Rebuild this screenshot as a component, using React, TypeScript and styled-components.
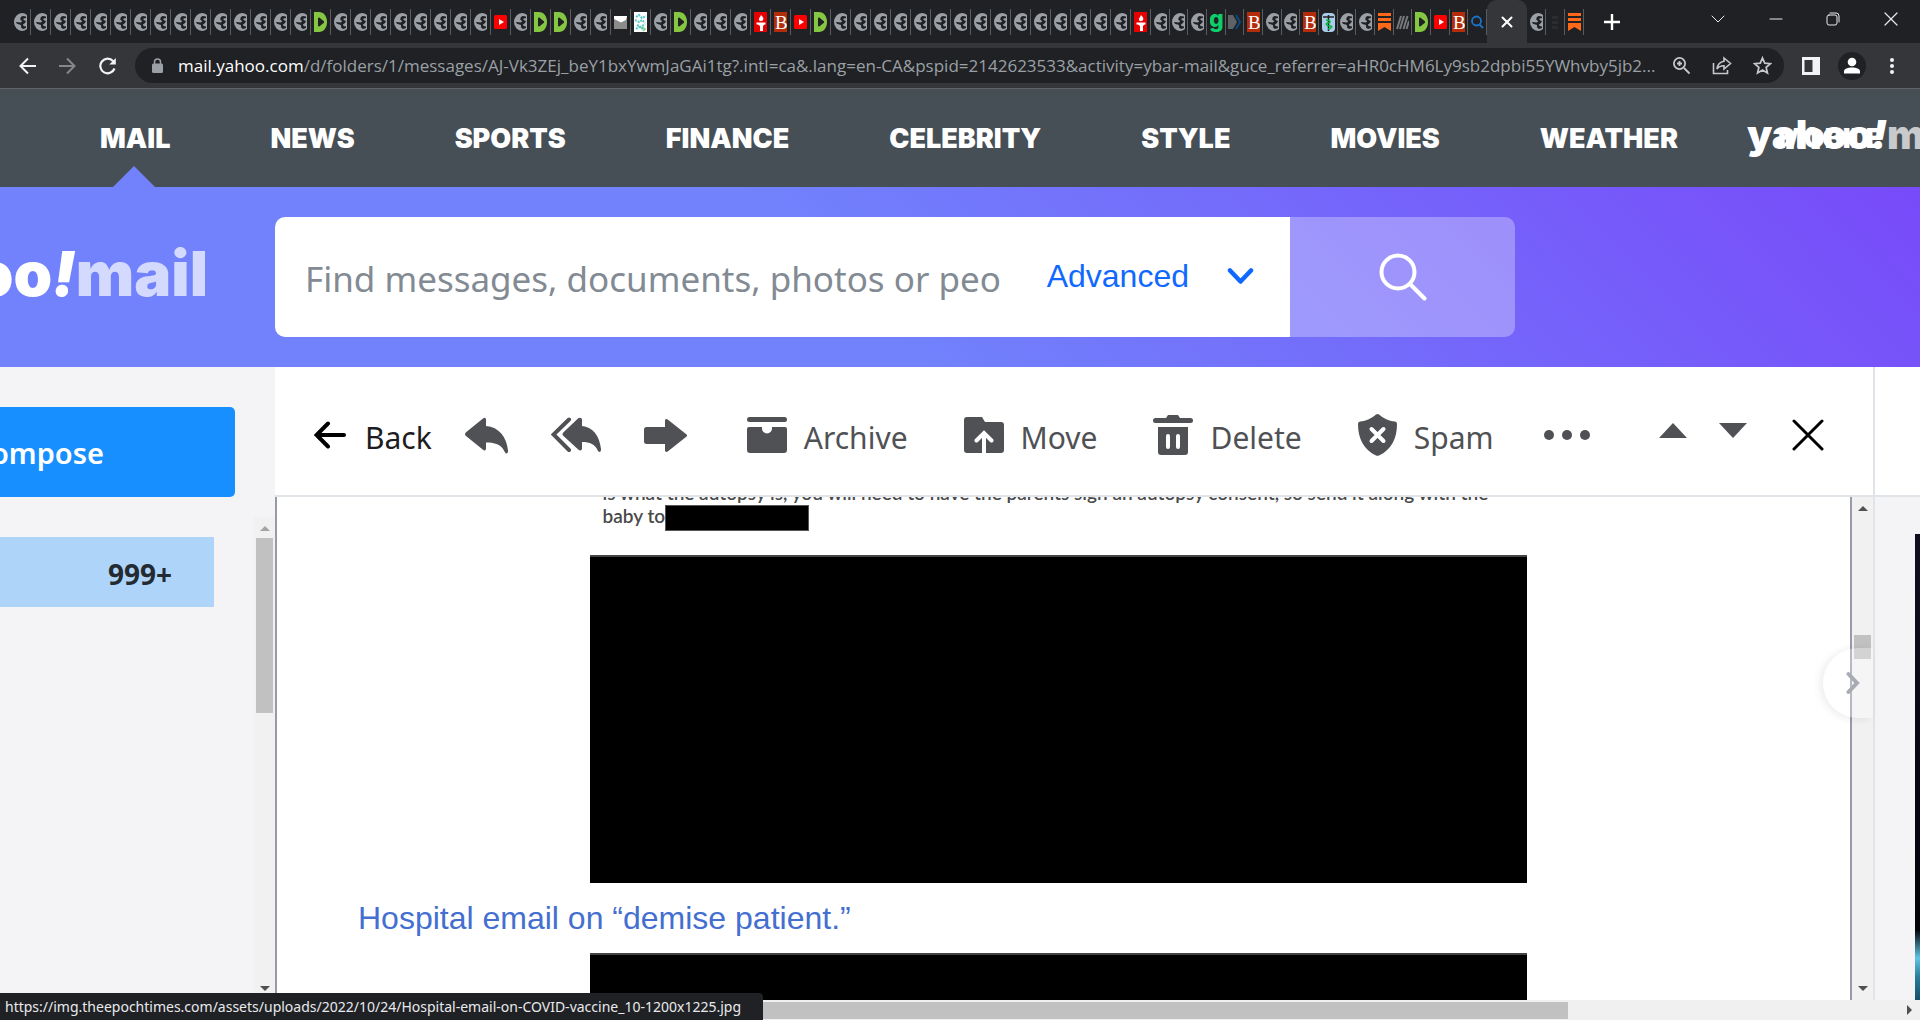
import React from "react";
import styled, { createGlobalStyle } from "styled-components";

const UI = `"Noto Sans", "Open Sans", sans-serif`;
const CHROME = `"Open Sans", "Noto Sans", sans-serif`;
const ARIAL = `"Liberation Sans", Arial, sans-serif`;

const Global = createGlobalStyle`
  *, *::before, *::after { box-sizing: border-box; }
  html, body { margin: 0; padding: 0; overflow: hidden; }
  button { border: 0; padding: 0; margin: 0; background: none; font: inherit; color: inherit; cursor: pointer; }
  a { color: inherit; text-decoration: none; }
  svg { display: block; flex: none; }
`;

const Page = styled.div`
  display: flex;
  flex-direction: column;
  height: 100vh;
  overflow: hidden;
  background: #fff;
  font-family: ${UI};
  position: relative;
`;

/* ---------- browser chrome ---------- */

const TabStrip = styled.div`
  display: flex;
  align-items: center;
  height: 43px;
  flex: none;
  padding-left: 11px;
  background: #202124;
`;

const Tab = styled.button<{ $w: number }>`
  flex: none;
  display: flex;
  align-items: center;
  justify-content: center;
  width: ${(p) => p.$w}px;
  height: 26px;
  border-right: 1px solid #5a5c60;
`;

const ActiveTab = styled.div`
  flex: none;
  align-self: flex-end;
  display: flex;
  align-items: center;
  justify-content: center;
  width: 40px;
  height: 43px;
  border-radius: 9px 9px 0 0;
  background: #35363a;
  color: #fff;
`;

const NewTab = styled.button`
  margin-left: 20px;
  color: #fff;
`;

const WindowButtons = styled.div`
  display: flex;
  align-items: center;
  justify-content: space-between;
  width: 187px;
  margin: 0 22px 6px auto;
  color: #e8eaed;
`;

const Toolbar = styled.div`
  display: flex;
  align-items: center;
  height: 46px;
  flex: none;
  padding: 0 20px 0 18px;
  border-bottom: 1px solid #5f6368;
  background: #35363a;
  color: #f1f3f4;
`;

const NavButtons = styled.div`
  display: flex;
  align-items: center;
  gap: 21px;
  width: 117px;
`;

const AddressBar = styled.div`
  display: flex;
  align-items: center;
  flex: 1;
  min-width: 0;
  height: 35px;
  padding: 0 12px 0 15px;
  border-radius: 18px;
  background: #202124;
  color: #c4c7cb;
`;

const Url = styled.div`
  flex: 1;
  min-width: 0;
  margin-left: 14px;
  overflow: hidden;
  white-space: nowrap;
  font: 17px/24px ${CHROME};
  color: #9aa0a6;
`;

const Host = styled.span`
  color: #fff;
`;

const AddressActions = styled.div`
  display: flex;
  gap: 21px;
  margin-left: 14px;
`;

const ChromeActions = styled.div`
  display: flex;
  align-items: center;
  gap: 18px;
  margin-left: 18px;
`;

const Avatar = styled.button`
  display: flex;
  align-items: center;
  justify-content: center;
  width: 28px;
  height: 28px;
  border-radius: 50%;
  background: #202124;
`;

/* ---------- yahoo header ---------- */

const SiteNav = styled.nav`
  position: relative;
  display: flex;
  flex: none;
  gap: 100px;
  height: 98px;
  padding: 0 0 0 100px;
  overflow: hidden;
  background: #464e56;
`;

const SiteLink = styled.a<{ $current?: boolean }>`
  position: relative;
  flex: none;
  padding-top: 35px;
  font: 900 27px/30px Inter, ${ARIAL};
  color: #fff;
  &::after {
    content: "";
    display: ${(p) => (p.$current ? "block" : "none")};
    position: absolute;
    left: 50%;
    bottom: 0;
    margin-left: -22px;
    border: 21px solid transparent;
    border-top: 0;
    border-bottom-color: #7182fc;
  }
`;

const Logo = styled.a<{ $size: number }>`
  display: flex;
  font: 900 ${(p) => p.$size}px/1 Inter, sans-serif;
  color: #fff;
`;

const FloatingLogo = styled(Logo)`
  position: absolute;
  top: 26px;
  left: calc(100% - 173px);
`;

const Bang = styled.span`
  font-style: italic;
`;

const Faded = styled.span`
  opacity: 0.7;
`;

const SearchHeader = styled.header`
  display: flex;
  flex: none;
  align-items: center;
  height: 180px;
  background: linear-gradient(45deg, #7182fc 44%, #784af9 100%);
`;

const LogoSlot = styled.div`
  display: flex;
  justify-content: flex-end;
  flex: none;
  width: 275px;
  padding: 0 67px 6px 0;
`;

const SearchForm = styled.form`
  display: flex;
  width: 1240px;
  height: 120px;
  overflow: hidden;
  border-radius: 10px;
`;

const SearchField = styled.div`
  display: flex;
  flex: 1;
  min-width: 0;
  align-items: center;
  padding: 0 36px 0 30px;
  background: #fff;
`;

const SearchInput = styled.input`
  flex: 1;
  min-width: 0;
  height: 60px;
  padding: 2px 0 0;
  border: 0;
  outline: 0;
  font: 35px/56px ${UI};
  &::placeholder {
    color: #828a93;
    opacity: 1;
  }
`;

const Advanced = styled.button`
  display: flex;
  align-items: center;
  gap: 38px;
  margin-left: 32px;
  padding-bottom: 2px;
  font: 32px/36px ${ARIAL};
  color: #0f69ff;
`;

const SearchButton = styled.button`
  display: flex;
  align-items: center;
  justify-content: center;
  width: 225px;
  background: rgba(255, 255, 255, 0.3);
`;

/* ---------- mail body ---------- */

const Workspace = styled.div`
  display: flex;
  flex: 1;
  min-height: 0;
`;

const Sidebar = styled.aside`
  display: flex;
  flex-direction: column;
  flex: none;
  width: 275px;
  background: #f4f4f6;
`;

const Compose = styled.button`
  display: flex;
  align-items: center;
  justify-content: flex-end;
  flex: none;
  width: 235px;
  height: 90px;
  margin: 40px 0 20px;
  padding: 2px 131px 0 0;
  border-radius: 0 5px 5px 0;
  background: #188fff;
  font: 600 29px/40px ${UI};
  color: #fff;
`;

const FolderPane = styled.div`
  display: flex;
  flex: 1;
  min-height: 0;
  justify-content: space-between;
`;

const FolderRow = styled.a`
  display: flex;
  align-items: center;
  justify-content: flex-end;
  width: 214px;
  height: 70px;
  margin-top: 20px;
  padding: 3px 42px 0 0;
  background: #aed4fa;
  font: 700 28px/36px ${UI};
  color: #232a31;
`;

const ScrollTrack = styled.div<{ $w: number }>`
  display: flex;
  flex-direction: column;
  align-items: center;
  flex: none;
  width: ${(p) => p.$w}px;
  background: #f1f1f1;
`;

const ScrollThumb = styled.div<{ $top: number; $h: number }>`
  width: 17px;
  height: ${(p) => p.$h}px;
  margin: ${(p) => p.$top}px 0 auto;
  background: #c1c1c1;
`;

const Arrow = styled.span<{ $dir: "up" | "down"; $dim?: boolean }>`
  flex: none;
  border: 5px solid transparent;
  ${(p) =>
    p.$dir === "up"
      ? `border-top: 0; border-bottom-color: ${p.$dim ? "#a3a3a3" : "#505050"}; margin-top: 9px;`
      : `border-bottom: 0; border-top-color: #505050; margin-bottom: 9px;`}
`;

const Reader = styled.main`
  position: relative;
  display: flex;
  flex-direction: column;
  flex: 1;
  min-width: 0;
`;

const Actions = styled.div`
  display: flex;
  align-items: center;
  flex: none;
  height: 130px;
  padding: 13px 49px 0 39px;
  border-bottom: 2px solid #e0e4e9;
  color: #4f5154;
`;

const ActionGroup = styled.div<{ $gap: number; $before?: number }>`
  display: flex;
  align-items: center;
  gap: ${(p) => p.$gap}px;
  margin-left: ${(p) => p.$before ?? 0}px;
`;

const Action = styled.button<{ $strong?: boolean }>`
  display: flex;
  align-items: center;
  gap: ${(p) => (p.$strong ? 19 : 17)}px;
  font: 30px/40px ${UI};
  color: ${(p) => (p.$strong ? "#1d1d1f" : "#4f5154")};
  & > svg {
    margin-top: -5px;
  }
`;

const MessageRow = styled.div`
  display: flex;
  flex: 1;
  min-height: 0;
`;

const Message = styled.article`
  flex: 1;
  min-width: 0;
  overflow: hidden;
  padding: 0 92px 0 81px;
  border: solid #979ba7;
  border-width: 0 2px;
`;

const Scan = styled.div`
  width: 937px;
  max-width: 100%;
  margin: 0 auto;
`;

const ScanText = styled.p`
  margin: -16px 0 28px 13px;
  height: 46px;
  font: 600 19px/23px Lato, sans-serif;
  color: #4a4a4a;
  white-space: nowrap;
`;

const InlineRedaction = styled.span`
  display: inline-block;
  width: 144px;
  height: 26px;
  margin: -2px 0;
  vertical-align: middle;
  background: #000;
  border: 1px solid #555;
`;

const Redaction = styled.div`
  height: 328px;
  background: #000;
  border-top: 2px solid #444;
`;

const Caption = styled.a`
  display: block;
  margin: 17px 0;
  font: 32px/36px ${ARIAL};
  color: #446fd0;
`;

const Collapse = styled.button`
  position: absolute;
  right: 0;
  top: 281px;
  display: flex;
  align-items: center;
  justify-content: center;
  width: 50px;
  height: 70px;
  padding-left: 10px;
  border-radius: 35px 0 0 35px;
  background: rgba(255, 255, 255, 0.3);
  box-shadow: -3px 1px 8px rgba(0, 0, 0, 0.08);
  color: #a9abb3;
`;

const SidePane = styled.aside`
  display: flex;
  flex-direction: column;
  flex: none;
  width: 47px;
  border-left: 2px solid #e0e4e9;
`;

const SidePaneTop = styled.div`
  height: 130px;
  flex: none;
  border-bottom: 2px solid #e0e4e9;
`;

const SidePaneBody = styled.div`
  display: flex;
  flex: 1;
  justify-content: flex-end;
  padding-top: 37px;
  background: #f4f4f7;
`;

const Advert = styled.div`
  width: 5px;
  background: linear-gradient(#100f20, #02030a 85%, #5fc4e6 91%, #2a7d9b 95%, #14506b);
`;

const BottomScroll = styled.div`
  display: flex;
  align-items: center;
  flex: none;
  height: 20px;
  padding-right: 8px;
  background: #f0f0f0;
`;

const BottomThumb = styled.div`
  width: 1548px;
  height: 17px;
  margin: 0 auto 0 20px;
  background: #c1c1c1;
`;

const BottomArrow = styled.span`
  border: 5px solid transparent;
  border-right: 0;
  border-left-color: #505050;
`;

const StatusBubble = styled.div`
  position: absolute;
  left: 0;
  bottom: 0;
  min-width: 763px;
  height: 27px;
  padding: 0 10px 0 5px;
  border-radius: 0 4px 0 0;
  background: #202124;
  font-size: 14px;
  line-height: 27px;
  color: #e8eaed;
  white-space: nowrap;
`;

/* ---------- favicons ---------- */

type Kind = "e" | "D" | "Y" | "M" | "P" | "T" | "B" | "g" | "n" | "c" | "S" | "h" | "q" | "k";

const Favicon = ({ kind }: { kind: Kind }) => {
  const art: Record<Kind, React.ReactNode> = {
    e: (
      <>
        <ellipse cx="8" cy="10" rx="8" ry="9" fill="#9aa0a6" />
        <path d="M8.500 4C6.500 5 6 6.500 6.500 8l1.700 1L7 10.500l-5-.5c.2 1.600 1.600 2.200 3.500 2.500 1.500.3 2 1.200 1.500 3l2 1.500 3-1V14.500L9.500 14 9 12.500l2-1.500 1-2-2.500-1V6.500L12 6V4.500z" fill="#202124" />
      </>
    ),
    D: (
      <>
        <path d="M0 0h5c4.500 0 8 4 8 10s-3.500 10-8 10H0z" fill="#85c742" />
        <path d="M4 6.500c0-1 .8-1.300 1.600-.8l4 3.200c.7.600.7 1.600 0 2.200l-4 3.200c-.8.500-1.600.2-1.600-.8z" fill="#202124" />
      </>
    ),
    Y: (
      <>
        <rect y="3" width="13" height="14" rx="1.500" fill="#f00" />
        <path d="M5 7l5 3-5 3z" fill="#fff" />
      </>
    ),
    M: (
      <>
        <rect y="4" width="13" height="13" fill="#8b8b8b" />
        <path d="M0 4h13l-1 4-5 2.500L0 7z" fill="#fff" />
      </>
    ),
    P: (
      <>
        <rect width="13" height="20" fill="#fff" />
        <path d="M2 5l3-2 3 3 4-2M1 8l4 2 3-2 3 3M3 13l4 2 4-3M2 17l3-2 4 2" stroke="#5cc" strokeWidth="2" strokeDasharray="2 1" fill="none" />
        <path d="M8 15l3 2-2 2" stroke="#7c7" strokeWidth="1.500" fill="none" />
      </>
    ),
    T: (
      <>
        <rect width="13" height="20" fill="#e60000" />
        <path d="M7 3c2 2 3 3.500 2 5-.5 1.500-3.500 1.500-4 0-.7-1.500 1-2.500 2-5zM2.500 10.500h9v2h-1L9 14v5H6v-5l-2-1.500H2.500z" fill="#fff" />
      </>
    ),
    B: (
      <>
        <rect width="13" height="20" fill="#b32d0b" />
        <text x="1" y="17" fontFamily="Liberation Serif" fontSize="19" fill="#fff">B</text>
      </>
    ),
    g: <text x="-1" y="15" fontFamily="Inter" fontWeight="800" fontSize="23" fill="#0ccf6a">g</text>,
    n: (
      <>
        <path d="M0 3h5l4 7-4 7H0z" fill="#5f6368" />
        <path d="M8 3l4 7-4 7" stroke="#0b4a80" strokeWidth="2" fill="none" />
      </>
    ),
    c: (
      <>
        <rect y="1" width="13" height="19" rx="4" fill="#a9cdea" />
        <path d="M1 5h11M6.500 3v16" stroke="#222" strokeWidth="1.500" />
        <path d="M4 8c5 0 5 3 2 3s-2 3 2 3 0 3-2 3" stroke="#0b3" strokeWidth="1.500" fill="none" />
      </>
    ),
    S: <path d="M0 1h13v3H0zM0 6h13v3H0zM0 11h13v8l-6.500-4L0 19z" fill="#ff6719" />,
    h: <path d="M1 17L5 4M4 17L8 4M7.500 17l4-13M10.500 17l2.500-8" stroke="#77797b" strokeWidth="2" />,
    q: (
      <>
        <circle cx="5.500" cy="9" r="4.500" stroke="#1a73c8" strokeWidth="1.800" fill="none" />
        <path d="M8.500 12.500L12 16" stroke="#1a73c8" strokeWidth="2" />
      </>
    ),
    k: <path d="M3 4h6v3H3zM3 9h6v3H3zM3 14h6v3H3z" fill="#2b2c2e" />,
  };
  return (
    <svg width="13" height="20" viewBox="0 0 13 20" aria-hidden="true">
      {art[kind]}
    </svg>
  );
};

const WIDE = "eeeeeeeeeeeeeeeDeeeeeeeeYeDDeeMPeDeeeTBYDeeeeeeeeeeeeeeeT".split("") as Kind[];
const NARROW = "eeegnBeeBceeShDYBq".split("") as Kind[];
const TRAILING = "ekS".split("") as Kind[];

const SITES = ["MAIL", "NEWS", "SPORTS", "FINANCE", "CELEBRITY", "STYLE", "MOVIES", "WEATHER", "MOBILE"];

const line = { fill: "none", stroke: "currentColor", strokeLinecap: "round" as const };

export default function App() {
  return (
    <Page>
      <Global />
      <TabStrip>
        {WIDE.map((k, i) => (
          <Tab key={i} $w={20} aria-label={`Tab ${i + 1}`}><Favicon kind={k} /></Tab>
        ))}
        {NARROW.map((k, i) => (
          <Tab key={i} $w={i % 3 === 1 ? 18 : 19} aria-label={`Tab ${i + 58}`}><Favicon kind={k} /></Tab>
        ))}
        <ActiveTab>
          <button aria-label="Close tab">
            <svg width="12" height="12" viewBox="0 0 12 12" {...line} strokeWidth="2"><path d="M1.500 1.500l9 9M10.500 1.500l-9 9" /></svg>
          </button>
        </ActiveTab>
        {TRAILING.map((k, i) => (
          <Tab key={i} $w={19} aria-label={`Tab ${i + 77}`}><Favicon kind={k} /></Tab>
        ))}
        <NewTab aria-label="New tab">
          <svg width="16" height="16" viewBox="0 0 16 16" fill="none" stroke="currentColor" strokeWidth="2.400"><path d="M8 0v16M0 8h16" /></svg>
        </NewTab>
        <WindowButtons>
          <button aria-label="Search tabs"><svg width="14" height="14" viewBox="0 0 14 14" {...line}><path d="M1 4l6 6 6-6" /></svg></button>
          <button aria-label="Minimize"><svg width="14" height="14" viewBox="0 0 14 14" {...line}><path d="M1 7h12" /></svg></button>
          <button aria-label="Restore"><svg width="14" height="14" viewBox="0 0 14 14" {...line}><rect x="1" y="3" width="10" height="10" rx="2" /><path d="M4 1h6a3 3 0 013 3v6" /></svg></button>
          <button aria-label="Close"><svg width="14" height="14" viewBox="0 0 14 14" {...line} strokeWidth="1.200"><path d="M1 1l12 12M13 1L1 13" /></svg></button>
        </WindowButtons>
      </TabStrip>

      <Toolbar>
        <NavButtons>
          <button aria-label="Back"><svg width="19" height="18" viewBox="0 0 19 18" fill="none" stroke="currentColor" strokeWidth="2"><path d="M18 9H3M10 1.500L2.500 9l7.500 7.500" /></svg></button>
          <button aria-label="Forward"><svg width="19" height="18" viewBox="0 0 19 18" fill="none" stroke="#85878a" strokeWidth="2"><path d="M1 9h15M9 1.500L16.500 9 9 16.500" /></svg></button>
          <button aria-label="Reload"><svg width="19" height="18" viewBox="0 0 19 18" fill="none" stroke="currentColor" strokeWidth="2.200"><path d="M16.500 11.500A7.300 7.300 0 1115 4l1 1.500" /><path d="M17.800 1v6.500h-6.500z" fill="currentColor" stroke="none" /></svg></button>
        </NavButtons>
        <AddressBar>
          <svg width="14" height="16" viewBox="0 0 14 16"><rect x="2" y="5.500" width="11" height="9.500" rx="1.500" fill="#9aa0a6" /><path d="M4.500 6V4a3 3 0 016 0v2" fill="none" stroke="#9aa0a6" strokeWidth="1.500" /></svg>
          <Url>
            <Host>mail.yahoo.com</Host>/d/folders/1/messages/AJ-Vk3ZEj_beY1bxYwmJaGAi1tg?.intl=ca&amp;.lang=en-CA&amp;pspid=2142623533&amp;activity=ybar-mail&amp;guce_referrer=aHR0cHM6Ly9sb2dpbi55YWhvby5jb2...
          </Url>
          <AddressActions>
            <button aria-label="Zoom"><svg width="19" height="19" viewBox="0 0 19 19" fill="none" stroke="currentColor" strokeWidth="1.800"><circle cx="7.500" cy="7.500" r="5.600" /><path d="M12 12l5.500 5.500M5 7.500h5M7.500 5v5" /></svg></button>
            <button aria-label="Share"><svg width="20" height="19" viewBox="0 0 20 19" fill="none" stroke="currentColor" strokeWidth="1.600"><path d="M1.500 7v10.500h14V14M12 2l6.500 5.500L12 13v-3.200c-3.500 0-5.500 1-7 3.200.5-4.500 3-7.200 7-7.800z" /></svg></button>
            <button aria-label="Bookmark"><svg width="19" height="19" viewBox="0 0 24 24" fill="none" stroke="currentColor" strokeWidth="2.200"><path d="M12 2.500l2.800 6.600 7.200.6-5.400 4.700 1.600 7L12 17.700l-6.200 3.700 1.600-7L2 9.700l7.200-.6z" /></svg></button>
          </AddressActions>
        </AddressBar>
        <ChromeActions>
          <button aria-label="Side panel"><svg width="18" height="18" viewBox="0 0 18 18"><path fillRule="evenodd" d="M0 0h18v18H0zM2.500 3v12h8V3z" fill="currentColor" /></svg></button>
          <Avatar aria-label="Profile"><svg width="18" height="18" viewBox="0 0 18 18" fill="#fff"><circle cx="9" cy="5" r="4.300" /><path d="M1 16.500v-2c0-3 4-4 8-4s8 1 8 4v2z" /></svg></Avatar>
          <button aria-label="Menu"><svg width="16" height="18" viewBox="0 0 16 18" fill="currentColor"><circle cx="8" cy="3" r="2" /><circle cx="8" cy="9" r="2" /><circle cx="8" cy="15" r="2" /></svg></button>
        </ChromeActions>
      </Toolbar>

      <SiteNav>
        {SITES.map((s) => (
          <SiteLink key={s} href="#" $current={s === "MAIL"}>{s}</SiteLink>
        ))}
        <FloatingLogo href="#" $size={40}>yahoo<Bang>!</Bang><Faded>mail</Faded></FloatingLogo>
      </SiteNav>

      <SearchHeader>
        <LogoSlot>
          <Logo href="#" $size={62}>yahoo<Bang>!</Bang><Faded>mail</Faded></Logo>
        </LogoSlot>
        <SearchForm onSubmit={(e) => e.preventDefault()}>
          <SearchField>
            <SearchInput aria-label="Search" placeholder="Find messages, documents, photos or peo" />
            <Advanced type="button">
              Advanced
              <svg width="27" height="18" viewBox="0 0 27 18" {...line} strokeWidth="4.500" strokeLinejoin="round"><path d="M3 3.500l10.500 11L24 3.500" /></svg>
            </Advanced>
          </SearchField>
          <SearchButton aria-label="Search mail">
            <svg width="48" height="48" viewBox="0 0 48 48" fill="none" stroke="#fff" strokeWidth="4" strokeLinecap="round"><circle cx="19" cy="19" r="16.500" /><path d="M31 31l14.500 14.500" /></svg>
          </SearchButton>
        </SearchForm>
      </SearchHeader>

      <Workspace>
        <Sidebar>
          <Compose>Compose</Compose>
          <FolderPane>
            <FolderRow href="#">999+</FolderRow>
            <ScrollTrack $w={21}>
              <Arrow $dir="up" $dim />
              <ScrollThumb $top={7} $h={175} />
              <Arrow $dir="down" />
            </ScrollTrack>
          </FolderPane>
        </Sidebar>

        <Reader>
          <Actions>
            <Action $strong>
              <svg width="32" height="28" viewBox="0 0 32 28" fill="none" stroke="#000" strokeWidth="4" strokeLinecap="round"><path d="M30 14H3M14 2.500L2.500 14 14 25.500" /></svg>
              Back
            </Action>
            <ActionGroup $gap={43} $before={33}>
              <Action aria-label="Reply"><svg width="43" height="37" viewBox="0 0 43 37" fill="currentColor"><path d="M18 1.500c1.500-1.300 3-.7 3 1.300V9c13 1 20.500 11 22 24.500.2 3.500-2.300 4-3.500 1C36.500 28 31 25.500 21 25.500v6c0 2-1.500 2.600-3 1.300L1 19c-1.300-1.100-1.300-2.600 0-3.700z" /></svg></Action>
              <Action aria-label="Reply all"><svg width="50" height="36" viewBox="0 0 50 36"><path d="M27 1.500c1.500-1.300 4-.7 4 1.300V9c11 1 17.500 10 19 23 .2 3.500-2.300 4-3.500 1C44 27.500 39 25 31 25v6.500c0 2-2 2.600-3.500 1.300L12.500 19c-1.300-1.100-1.300-2.600 0-3.700z" fill="currentColor" /><path d="M18 2.500L2.500 17.500 18 33" {...line} strokeWidth="4" /></svg></Action>
              <Action aria-label="Forward"><svg width="43" height="33" viewBox="0 0 43 33" fill="currentColor"><path d="M21 2c0-2 1.500-2.500 3-1.300l18.300 14.600c1 .8 1 1.600 0 2.400L24 32.300c-1.500 1.200-3 .7-3-1.300v-6H2.500C1 25 0 24 0 22.500v-12C0 9 1 8 2.500 8H21z" /></svg></Action>
            </ActionGroup>
            <ActionGroup $gap={56} $before={60}>
              <Action>
                <svg width="40" height="36" viewBox="0 0 40 36" fill="currentColor"><rect width="40" height="5" rx="2.500" /><path d="M2 10h13v1.500a5 5 0 0010 0V10h13a2 2 0 012 2v21a3 3 0 01-3 3H3a3 3 0 01-3-3V12a2 2 0 012-2z" /></svg>
                Archive
              </Action>
              <Action>
                <svg width="40" height="36" viewBox="0 0 40 36"><path d="M3 0h15l3 5h16a3 3 0 013 3v25a3 3 0 01-3 3H3a3 3 0 01-3-3V3a3 3 0 013-3z" fill="currentColor" /><path d="M20 36V16M12.500 23.500L20 16l7.500 7.500" fill="none" stroke="#fff" strokeWidth="4" strokeLinecap="round" /></svg>
                Move
              </Action>
              <Action>
                <svg width="40" height="40" viewBox="0 0 40 40"><path d="M2.500 3H13l2-3h10l2 3h10.500a2.500 2.500 0 010 5h-35a2.500 2.500 0 010-5zM5 12h30v25a3 3 0 01-3 3H8a3 3 0 01-3-3z" fill="currentColor" /><path d="M15 21v11M25 21v11" stroke="#fff" strokeWidth="4" strokeLinecap="round" /></svg>
                Delete
              </Action>
              <Action>
                <svg width="39" height="42" viewBox="0 0 39 42"><path d="M18 .5q1.500-.8 3 0C26 4.500 30 7 37 7.500q2 .3 2 2.500C39 25 33 36 21 41.500q-1.500.7-3 0C6 36 0 25 0 10q0-2.200 2-2.500C9 7 13 4.500 18 .5z" fill="currentColor" /><path d="M13.500 15l12 12M25.500 15l-12 12" stroke="#fff" strokeWidth="4" strokeLinecap="round" /></svg>
                Spam
              </Action>
            </ActionGroup>
            <ActionGroup $gap={0} $before={50}>
              <Action aria-label="More"><svg width="46" height="10" viewBox="0 0 46 10" fill="currentColor"><circle cx="5" cy="5" r="5" /><circle cx="23" cy="5" r="5" /><circle cx="41" cy="5" r="5" /></svg></Action>
            </ActionGroup>
            <ActionGroup $gap={32} $before={69}>
              <Action aria-label="Previous message"><svg width="28" height="24" viewBox="0 0 28 24" fill="currentColor"><path d="M14 0l14 15H0z" /></svg></Action>
              <Action aria-label="Next message"><svg width="28" height="24" viewBox="0 0 28 24" fill="currentColor"><path d="M14 15L28 0H0z" /></svg></Action>
            </ActionGroup>
            <ActionGroup $gap={0} $before={45}>
              <Action aria-label="Close message"><svg width="32" height="32" viewBox="0 0 32 32" fill="none" stroke="#000" strokeWidth="3" strokeLinecap="round"><path d="M2 2l28 28M30 2L2 30" /></svg></Action>
            </ActionGroup>
          </Actions>
          <MessageRow>
            <Message>
              <Scan>
                <ScanText>
                  is what the autopsy is, you will need to have the parents sign an autopsy consent, so send it along with the
                  <br />
                  baby to<InlineRedaction />
                </ScanText>
                <Redaction />
              </Scan>
              <Caption href="#">Hospital email on “demise patient.”</Caption>
              <Scan>
                <Redaction />
              </Scan>
            </Message>
            <ScrollTrack $w={21}>
              <Arrow $dir="up" />
              <ScrollThumb $top={124} $h={24} />
              <Arrow $dir="down" />
            </ScrollTrack>
          </MessageRow>
          <Collapse aria-label="Hide panel">
            <svg width="14" height="24" viewBox="0 0 14 24" {...line} strokeWidth="4"><path d="M2.500 3L11 12l-8.500 9" /></svg>
          </Collapse>
        </Reader>

        <SidePane>
          <SidePaneTop />
          <SidePaneBody>
            <Advert />
          </SidePaneBody>
        </SidePane>
      </Workspace>

      <BottomScroll>
        <BottomThumb />
        <BottomArrow />
      </BottomScroll>
      <StatusBubble>https://img.theepochtimes.com/assets/uploads/2022/10/24/Hospital-email-on-COVID-vaccine_10-1200x1225.jpg</StatusBubble>
    </Page>
  );
}
